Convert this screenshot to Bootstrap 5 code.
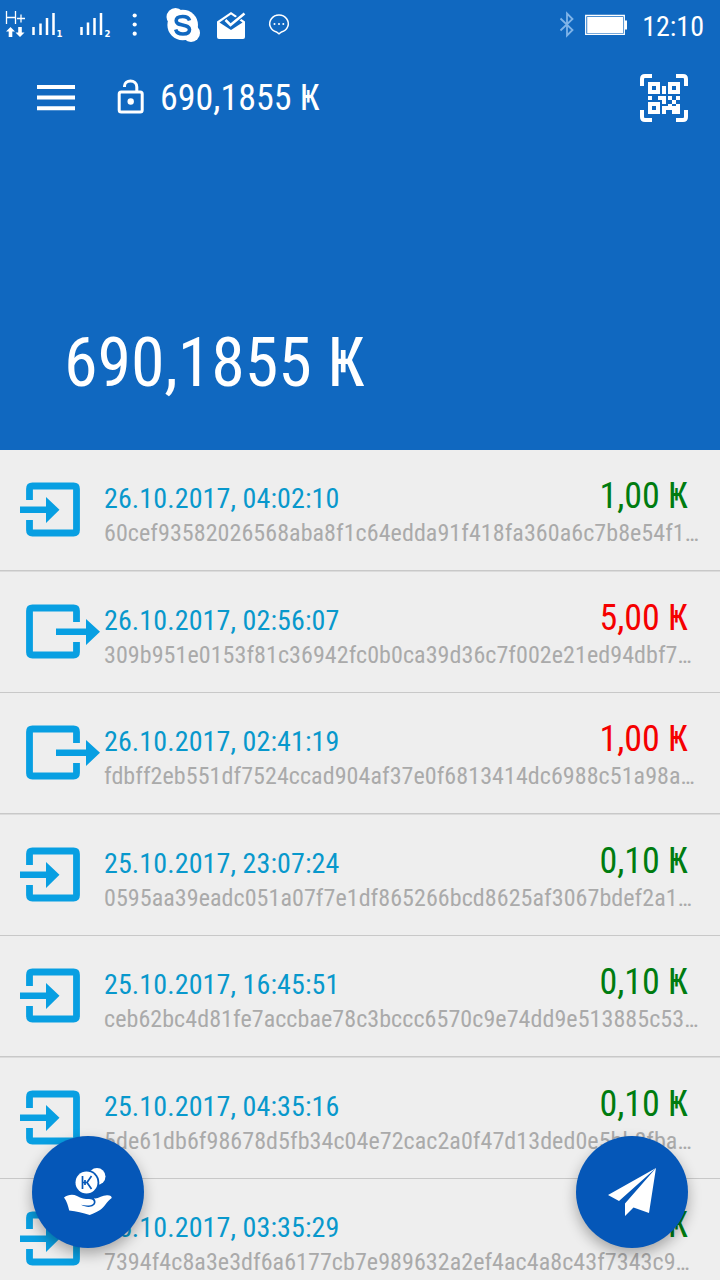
<!DOCTYPE html>
<html lang="en">
<head>
<meta charset="utf-8">
<meta name="viewport" content="width=device-width, initial-scale=1">
<title>Wallet</title>
<link href="https://cdn.jsdelivr.net/npm/bootstrap@5.3.0/dist/css/bootstrap.min.css" rel="stylesheet">
<style>
body{font-family:"Roboto Condensed",Roboto,"Liberation Sans",sans-serif;font-stretch:75%;background:#eee;height:1280px;overflow:hidden;line-height:1}
svg{display:block;flex:none;overflow:visible}
.top-area{background:#1068c0;height:450px}
.status-row{height:50px;padding-left:5px;padding-right:16px}
.clock{font-size:28px;padding-top:3px}
.bar-row{height:96px;padding:0 32px 0 37px}
.lock-icon{margin:0 15px 0 42px}
.title-sum{font-size:36px;white-space:nowrap}
.balance{font-size:68px;letter-spacing:-.07px;margin:183px 0 0 64px;white-space:nowrap}
.tx{height:121.5px;padding-left:20px;background:linear-gradient(#c8c8c8,#c8c8c8) 0 120px/100% 1.500px no-repeat}
.tx-body{width:596px;margin-left:4px}
.tx-icon{margin-top:30px}
.tx-date{font-size:28px;letter-spacing:.11px;color:#0898cc;padding-top:35px;height:69px;white-space:nowrap}
.tx-sum{font-size:36px;padding-top:28px;margin-right:12px;height:69px;margin-left:auto;white-space:nowrap}
.plus{color:#007c10}
.minus{color:#f50000}
.tx-hash{font-size:24px;letter-spacing:.07px;color:#aaa;line-height:29px;white-space:nowrap}
.fab{width:112px;height:112px;bottom:32px;background:#0557b8;box-shadow:0 6px 14px rgba(0,0,0,.3)}
.fab-left{left:32px}
.fab-right{right:32px}
.page{height:1280px}
</style>
</head>
<body>
<svg width="0" height="0" class="position-absolute">
<symbol id="in" viewBox="0 0 80 60"><path d="M9.500 20V9q0-3 3-3h41q3 0 3 3v41q0 3-3 3h-41q-3 0-3-3V40" fill="none" stroke="#089fe2" stroke-width="6.800"/><path d="M0 26.500h26V17l13.500 12.800L26 43V33H0z" fill="#089fe2"/></symbol>
<symbol id="out" viewBox="0 0 80 60"><path d="M56.500 20V9q0-3-3-3h-41q-3 0-3 3v41q0 3 3 3h41q3 0 3-3V40" fill="none" stroke="#089fe2" stroke-width="6.800"/><path d="M36 26.500h30V17l14 12.800L66 43V33H36z" fill="#089fe2"/></symbol>
</svg>
<div class="page position-relative overflow-hidden">
<header class="top-area text-white">
  <div class="status-row d-flex align-items-center">
    <svg width="290" height="50" viewBox="5 0 290 50" fill="#fff">
      <path d="M6.500 11v13M15.500 11v13M6.500 17.500h9M17 18.500h8M21 14.500v8" stroke="#fff" stroke-width="1.300" fill="none"/>
      <path d="M6 31.500l4.500-4.500 4.500 4.500h-2.700V37H8.700v-5.500zM15.500 32.500h2.700V27h3.600v5.500h2.700L20 37z"/>
      <path d="M33.500 27v8M40.500 23.500V35M47 18v17M53.500 13v22M81.500 27v8M88 22.500V35M94.500 18v17M101 13v22" stroke="#fff" stroke-width="2.500"/>
      <text x="56.500" y="37" font-size="9.500" font-weight="700" font-family="DejaVu Sans">1</text><text x="104.500" y="37" font-size="9.500" font-weight="700" font-family="DejaVu Sans">2</text>
      <circle cx="134.700" cy="15.500" r="2.100"/><circle cx="134.700" cy="24.500" r="2.100"/><circle cx="134.700" cy="33.700" r="2.100"/>
      <circle cx="182.700" cy="25" r="15.300"/><circle cx="175.500" cy="17" r="9"/><circle cx="191" cy="33" r="9"/>
      <path d="M189.500 20.500c-.800-3-3.200-4-6.800-4-4 0-6.500 1.500-6.500 4.200 0 3.200 3 3.500 6.500 4.300 3.600.8 6.800 1.300 6.800 4.500s-3 4.500-6.500 4.500c-4.300 0-6.500-1.500-7.300-4.500" fill="none" stroke="#1068c0" stroke-width="3.600"/>
      <path d="M217 21.500L231 12l14 9.500V37q0 2-2 2h-24q-2 0-2-2z"/><path d="M219.500 22.500L231 14.500l11.500 8L231 30z" fill="#1068c0"/><path d="M225.500 20.500l5 4.500 14-12" fill="none" stroke="#1068c0" stroke-width="5"/><path d="M225.500 20l5 5 14-11.500" fill="none" stroke="#fff" stroke-width="2.500"/>
      <path d="M276.500 32a9.300 8.600 0 1 1 5 0l-2.500 1.800z" fill="none" stroke="#fff" stroke-width="1.500"/><circle cx="274.500" cy="24" r="1"/><circle cx="279" cy="24" r="1"/><circle cx="283.300" cy="24" r="1"/>
    </svg>
    <svg class="ms-auto me-2" width="82" height="50" viewBox="552 0 82 50"><path d="M560.500 18.500l12 11.500-5.500 5.500v-22l5.500 5.500-12 11.500" fill="none" stroke="#7fb4e8" stroke-width="1.800"/><path d="M585.700 15.500h38.600v18.800h-38.600z" fill="none" stroke="#fff" stroke-width="1.300"/><path d="M587.200 17h35.800v16.200h-35.800zM625 20.500h2v9h-2z" fill="#fff"/></svg>
    <span class="clock">12:10</span>
  </div>
  <div class="bar-row d-flex align-items-center">
    <svg width="38" height="26" viewBox="0 0 38 26" fill="#fff"><path d="M0 0h38v4H0zM0 10.500h38v4H0zM0 21.300h38v4H0z"/></svg>
    <svg class="lock-icon" width="28" height="38" viewBox="117 78 28 38" fill="none" stroke="#fff" stroke-width="3"><rect x="119.200" y="91" width="23" height="20" rx="2"/><path d="M124.500 86v-1c0-3 2.600-5 6-5s6.300 2.400 6.300 6v5"/><circle cx="130.700" cy="100.500" r="3.200" fill="#fff" stroke="none"/></svg>
    <span class="title-sum">690,1855 Ҝ</span>
    <svg class="ms-auto" width="48" height="48" viewBox="0 0 48 48"><path d="M2 12V5q0-3 3-3h7M36 2h7q3 0 3 3v7M46 36v7q0 3-3 3h-7M12 46H5q-3 0-3-3v-7" fill="none" stroke="#fff" stroke-width="4"/><path fill="#fff" fill-rule="evenodd" d="M8 8h12v12H8zM12 12v4h4v-4zM28 8h12v12H28zM32 12v4h4v-4zM8 28h12v12H8zM12 32v4h4v-4zM22 12h4v8h-4zM8 22h4v4H8zM18 22h8v8h-4v-4h-4zM28 22h4v4h-4zM36 22h4v4h-4zM32 26h4v4h-4zM28 30h4v4h-4zM36 30h4v6h-4zM22 32h6v4h-2v4h-4zM32 32h4v8h-4zM28 34h4v2h-4zM36 36h4v4h-4z"/></svg>
  </div>
  <div class="balance">690,1855 Ҝ</div>
</header>
<main>
  <div class="tx d-flex"><svg class="tx-icon" width="80" height="60"><use href="#in"/></svg><div class="tx-body"><div class="d-flex"><div class="tx-date">26.10.2017, 04:02:10</div><div class="tx-sum plus">1,00 Ҝ</div></div><div class="tx-hash">60cef93582026568aba8f1c64edda91f418fa360a6c7b8e54f1…</div></div></div>
  <div class="tx d-flex"><svg class="tx-icon" width="80" height="60"><use href="#out"/></svg><div class="tx-body"><div class="d-flex"><div class="tx-date">26.10.2017, 02:56:07</div><div class="tx-sum minus">5,00 Ҝ</div></div><div class="tx-hash">309b951e0153f81c36942fc0b0ca39d36c7f002e21ed94dbf7…</div></div></div>
  <div class="tx d-flex"><svg class="tx-icon" width="80" height="60"><use href="#out"/></svg><div class="tx-body"><div class="d-flex"><div class="tx-date">26.10.2017, 02:41:19</div><div class="tx-sum minus">1,00 Ҝ</div></div><div class="tx-hash">fdbff2eb551df7524ccad904af37e0f6813414dc6988c51a98a…</div></div></div>
  <div class="tx d-flex"><svg class="tx-icon" width="80" height="60"><use href="#in"/></svg><div class="tx-body"><div class="d-flex"><div class="tx-date">25.10.2017, 23:07:24</div><div class="tx-sum plus">0,10 Ҝ</div></div><div class="tx-hash">0595aa39eadc051a07f7e1df865266bcd8625af3067bdef2a1…</div></div></div>
  <div class="tx d-flex"><svg class="tx-icon" width="80" height="60"><use href="#in"/></svg><div class="tx-body"><div class="d-flex"><div class="tx-date">25.10.2017, 16:45:51</div><div class="tx-sum plus">0,10 Ҝ</div></div><div class="tx-hash">ceb62bc4d81fe7accbae78c3bccc6570c9e74dd9e513885c53…</div></div></div>
  <div class="tx d-flex"><svg class="tx-icon" width="80" height="60"><use href="#in"/></svg><div class="tx-body"><div class="d-flex"><div class="tx-date">25.10.2017, 04:35:16</div><div class="tx-sum plus">0,10 Ҝ</div></div><div class="tx-hash">5de61db6f98678d5fb34c04e72cac2a0f47d13ded0e5bb8fba…</div></div></div>
  <div class="tx d-flex"><svg class="tx-icon" width="80" height="60"><use href="#in"/></svg><div class="tx-body"><div class="d-flex"><div class="tx-date">25.10.2017, 03:35:29</div><div class="tx-sum plus">0,10 Ҝ</div></div><div class="tx-hash">7394f4c8a3e3df6a6177cb7e989632a2ef4ac4a8c43f7343c9…</div></div></div>
</main>
<button class="fab fab-left btn border-0 rounded-circle position-absolute p-0 d-flex align-items-center justify-content-center" aria-label="Receive">
  <svg width="48" height="48" viewBox="0 0 48 48" fill="#fff"><circle cx="33" cy="8.500" r="8.500"/><circle cx="22.500" cy="14.500" r="12.800" fill="#0557b8"/><circle cx="22.500" cy="14.500" r="11"/><path d="M18.500 8v13M27.500 8l-4.500 6.500 4.500 6.500M18.500 14.500h4.500M21 12v5" fill="none" stroke="#0557b8" stroke-width="1.700"/><path d="M0 29.500c4-3 9-3.500 13-1.500 4 2.500 8 3 12 3 4.500 0 6 3 4 5-2.500 2-7 2-12 .800 7 3.700 14 2.200 14.500-2.500 0-1.600-.500-2.800-1.500-4 4 .700 8-2.800 13-3 3-.200 5 1.200 4.700 2.700-2 1.500-4 3.500-7 7.500-4 5-8 6.500-15 9.500-7-2.500-13-3.500-20.500-4.500C4 38 3 33 0 29.500z"/></svg>
</button>
<button class="fab fab-right btn border-0 rounded-circle position-absolute p-0 d-flex align-items-center justify-content-center" aria-label="Send">
  <svg width="48" height="48" viewBox="0 0 48 48" fill="#fff"><path d="M48 0L0 27l11 6zM48 0L17 35.500V48l8.500-8.500L41 45z"/></svg>
</button>
</div>
<script src="https://cdn.jsdelivr.net/npm/bootstrap@5.3.0/dist/js/bootstrap.bundle.min.js"></script>
</body>
</html>
